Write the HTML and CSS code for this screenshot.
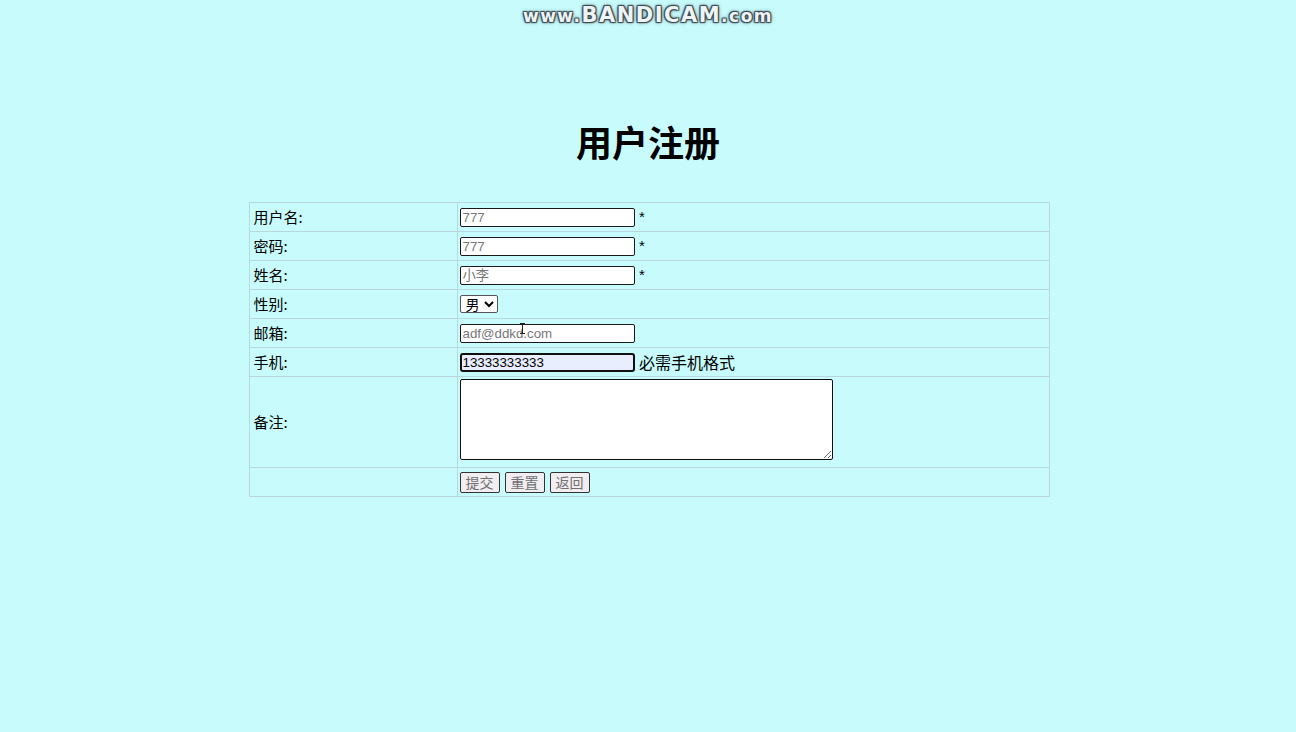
FILE: index.html
```html
<!DOCTYPE html>
<html lang="zh-CN">
<head>
<meta charset="utf-8">
<title>用户注册</title>
<link rel="stylesheet" href="styles.css">
</head>
<body>
<div class="watermark"><span class="wm-small">www.</span><span class="wm-big">BANDICAM</span><span class="wm-small">.com</span></div>
<div class="page">
  <h1 class="title">用户注册</h1>
  <form class="reg-form">
    <table class="reg-table">
      <tr class="row">
        <td class="label">用户名:</td>
        <td class="field"><input class="text-in" type="text" placeholder="777"> <span class="req">*</span></td>
      </tr>
      <tr class="row">
        <td class="label">密码:</td>
        <td class="field"><input class="text-in" type="password" placeholder="777"> <span class="req">*</span></td>
      </tr>
      <tr class="row">
        <td class="label">姓名:</td>
        <td class="field"><input class="text-in" type="text" placeholder="小李"> <span class="req">*</span></td>
      </tr>
      <tr class="row">
        <td class="label">性别:</td>
        <td class="field"><select class="sel"><option>男</option><option>女</option></select></td>
      </tr>
      <tr class="row">
        <td class="label">邮箱:</td>
        <td class="field cursor-cell"><input class="text-in" type="text" placeholder="adf@ddkd.com"><span class="ibeam"></span></td>
      </tr>
      <tr class="row">
        <td class="label">手机:</td>
        <td class="field"><input class="text-in focused" type="text" value="13333333333"> <span class="hint">必需手机格式</span></td>
      </tr>
      <tr class="row-tall">
        <td class="label">备注:</td>
        <td class="field memo-cell"><textarea class="memo"></textarea></td>
      </tr>
      <tr class="row">
        <td class="label"></td>
        <td class="field buttons"><button type="button" class="btn">提交</button><button type="reset" class="btn">重置</button><button type="button" class="btn">返回</button></td>
      </tr>
    </table>
  </form>
</div>
</body>
</html>
```

FILE: styles.css
```css
html, body {
  margin: 0;
  padding: 0;
  background: #c8fbfc;
}

body {
  font-family: "Liberation Sans", "Noto Sans CJK SC", sans-serif;
  font-size: 16px;
  color: #000;
  position: relative;
  min-height: 732px;
}

.watermark {
  position: absolute;
  top: 3px;
  left: 0;
  right: 0;
  text-align: center;
  font-family: "DejaVu Sans", sans-serif;
  font-weight: bold;
  color: #eef4f6;
  letter-spacing: 1.5px;
  text-shadow: 0 0 1px #3b4a50, 1px 1px 1px #3b4a50, -1px -1px 1px #3b4a50, 1px -1px 1px #3b4a50, -1px 1px 1px #3b4a50, 0 0 4px #55656c;
}

.wm-small {
  font-size: 17px;
}

.wm-big {
  font-size: 21px;
}

.page {
  padding-top: 115px;
}

.title {
  margin: 0 0 35px;
  text-align: center;
  font-family: "Noto Sans CJK SC", sans-serif;
  font-size: 36px;
  line-height: 52px;
  font-weight: bold;
}

.reg-form {
  margin: 0;
}

.reg-table {
  width: 801px;
  margin: 0 auto;
  border: 1px solid #b9d7dc;
  border-collapse: collapse;
  transform: translateX(1px);
}

.reg-table td {
  border: 1px solid #b9d7dc;
  padding: 0 2px;
  vertical-align: middle;
  white-space: nowrap;
}

.row td {
  height: 28px;
}

.row-tall td {
  height: 90px;
}

.reg-table .label {
  width: 201px;
  padding-left: 4px;
  font-family: "Noto Sans CJK SC", sans-serif;
  font-size: 15px;
  line-height: 20px;
}

.field {
  font-size: 16px;
}

.text-in {
  width: 175px;
  height: 19px;
  box-sizing: border-box;
  margin: 0;
  padding: 0 2px;
  border: 1px solid #1a1a1a;
  border-radius: 2px;
  background: #fff;
  font-family: "Liberation Sans", "Noto Sans CJK SC", sans-serif;
  font-size: 13.3px;
  vertical-align: middle;
  color: #000;
}

.text-in::placeholder {
  color: #777;
}

.text-in.focused {
  border: 2px solid #101010;
  border-radius: 3px;
  background: #e9eefe;
  padding: 0 1px;
  outline: none;
}

.req {
  font-size: 15px;
  vertical-align: middle;
}

.hint {
  font-family: "Noto Sans CJK SC", sans-serif;
  font-size: 16px;
  line-height: 20px;
  vertical-align: middle;
}

.sel {
  width: 38px;
  height: 18px;
  box-sizing: border-box;
  margin: 0;
  padding: 0 0 0 1px;
  border: 1px solid #555;
  border-radius: 2px;
  background: #fff;
  font-family: "Liberation Sans", "Noto Sans CJK SC", sans-serif;
  font-size: 14px;
  line-height: 16px;
  vertical-align: middle;
}

.cursor-cell {
  position: relative;
}

.ibeam {
  position: absolute;
  left: 62px;
  top: 4px;
  width: 5px;
  height: 11px;
  border-top: 1px solid #222;
  border-bottom: 1px solid #222;
  box-sizing: border-box;
}

.ibeam::after {
  content: "";
  position: absolute;
  left: 2px;
  top: 0;
  width: 1px;
  height: 9px;
  background: #222;
}

.reg-table .memo-cell {
  vertical-align: top;
  padding-top: 2px;
  height: 88px;
}

.memo {
  display: block;
  width: 373px;
  height: 81px;
  box-sizing: border-box;
  margin: 0;
  border: 1px solid #111;
  border-radius: 2px;
  background: #fff;
  resize: both;
}

.buttons {
  font-size: 0;
}

.btn {
  height: 21px;
  box-sizing: border-box;
  margin: 0 5px 0 0;
  padding: 0 5px;
  border: 1px solid #333;
  border-radius: 2px;
  background: #f1edf0;
  color: #707070;
  font-family: "Noto Sans CJK SC", sans-serif;
  font-size: 14px;
  line-height: 19px;
  vertical-align: middle;
}

.btn:last-child {
  margin-right: 0;
}
```
